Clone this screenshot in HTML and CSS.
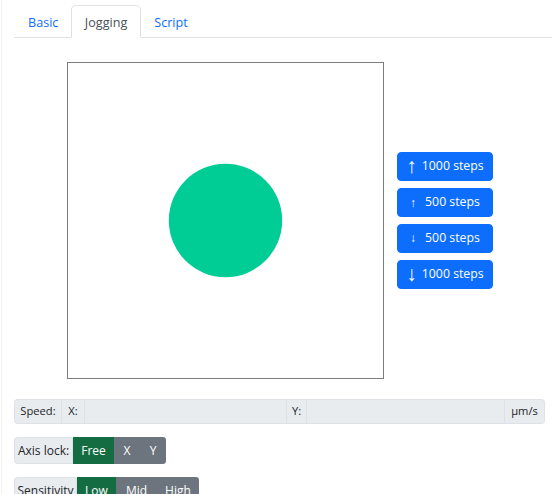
FILE: index.html
```html
<!DOCTYPE html>
<html>
<head>
<meta charset="utf-8">
<link rel="stylesheet" href="styles.css">
</head>
<body>
<div class="page">
  <ul class="tabs">
    <li class="tab">Basic</li>
    <li class="tab active">Jogging</li>
    <li class="tab">Script</li>
  </ul>
  <div class="jog">
    <div class="canvas">
      <svg width="315" height="315" viewBox="0 0 315 315"><circle cx="157.5" cy="157.5" r="56.7" fill="#00cc96"/></svg>
    </div>
    <div class="steps">
      <button class="btn-step"><span class="arr">↑</span>1000 steps</button>
      <button class="btn-step"><span class="arr sm">↑</span>500 steps</button>
      <button class="btn-step"><span class="arr sm">↓</span>500 steps</button>
      <button class="btn-step"><span class="arr">↓</span>1000 steps</button>
    </div>
  </div>
  <div class="group speed">
    <span class="lbl w-speed">Speed:</span>
    <span class="lbl w-x">X:</span>
    <span class="inp grow-x"></span>
    <span class="lbl w-y">Y:</span>
    <span class="inp grow-y"></span>
    <span class="lbl w-unit">µm/s</span>
  </div>
  <div class="group tall">
    <span class="lbl w-axis">Axis lock:</span>
    <span class="opt on w-free">Free</span>
    <span class="opt w-xy">X</span>
    <span class="opt w-xy last">Y</span>
  </div>
  <div class="group tall">
    <span class="lbl w-sens">Sensitivity</span>
    <span class="opt on w-low">Low</span>
    <span class="opt w-mid">Mid</span>
    <span class="opt w-high last">High</span>
  </div>
</div>
</body>
</html>
```
FILE: styles.css
```css
* { box-sizing: border-box; }
html, body { margin: 0; padding: 0; background: #fff; }
body {
  font-family: "Open Sans", "Noto Sans", sans-serif;
  color: #212529;
  font-size: 12.8px;
  line-height: 1.5;
}
.page {
  margin-left: 1px;
  border-left: 1px solid #f2f2f2;
  padding-left: 12px;
  min-height: 494px;
}
.tabs {
  list-style: none;
  margin: 0;
  padding: 5px 0 0 0;
  display: flex;
  border-bottom: 1px solid #dee2e6;
}
.tab {
  padding: 8px 12.5px 5px;
  height: 33px;
  margin-bottom: -1px;
  border: 1px solid transparent;
  border-top-left-radius: 4.8px;
  border-top-right-radius: 4.8px;
  color: #0d6efd;
  font-size: 12.6px;
}
.tab:first-child { padding-left: 13px; padding-right: 12px; }
.tab.active {
  color: #495057;
  border-color: #dee2e6 #dee2e6 #fff;
  background: #fff;
}
.jog {
  margin-top: 24px;
  padding-left: 53px;
  display: flex;
  align-items: center;
  gap: 13px;
}
.canvas {
  width: 317px;
  height: 317px;
  border: 1px solid #7d7d7d;
}
.canvas svg { display: block; }
.steps {
  display: flex;
  flex-direction: column;
  gap: 6.4px;
}
.btn-step {
  width: 96px;
  height: 29.6px;
  padding: 0;
  border: 1px solid #0d6efd;
  background: #0d6efd;
  color: #fff;
  border-radius: 4px;
  font-family: inherit;
  font-size: 12.3px;
  line-height: 1;
  display: flex;
  align-items: center;
  justify-content: center;
}
.arr {
  font-family: "Liberation Sans", sans-serif;
  font-size: 21px;
  margin-right: 5px;
  line-height: 1;
  position: relative;
  top: -1px;
}
.arr.sm { font-size: 12px; margin-right: 9px; top: 0; }
.group {
  display: flex;
  margin-right: 7px;
  font-size: 11.2px;
}
.speed {
  margin-top: 20px;
  height: 25px;
}
.tall {
  margin-top: 13px;
  height: 27px;
  font-size: 12px;
}
.group > span {
  display: flex;
  align-items: center;
  justify-content: center;
  white-space: nowrap;
}
.lbl {
  background: #e9ecef;
  border: 1px solid #dee2e6;
  margin-left: -1px;
  color: #212529;
}
.group > span:first-child {
  margin-left: 0;
  border-top-left-radius: 3.2px;
  border-bottom-left-radius: 3.2px;
}
.group > span:last-child {
  border-top-right-radius: 3.2px;
  border-bottom-right-radius: 3.2px;
}
.inp {
  background: #e9ecef;
  border: 1px solid #dee2e6;
  margin-left: -1px;
}
.w-speed { width: 48px; }
.w-x { width: 24px; }
.grow-x { width: 203px; }
.w-y { width: 21px; }
.grow-y { flex: 1; }
.w-unit { width: 41px; }
.opt {
  background: #6c757d;
  color: #fff;
}
.opt.on { background: #146c43; }
.w-axis { width: 59px; }
.w-free { width: 41px; }
.w-xy { width: 26px; }
.w-sens { width: 63px; }
.w-low { width: 39px; }
.w-mid { width: 41px; }
.w-high { width: 42px; }
```
